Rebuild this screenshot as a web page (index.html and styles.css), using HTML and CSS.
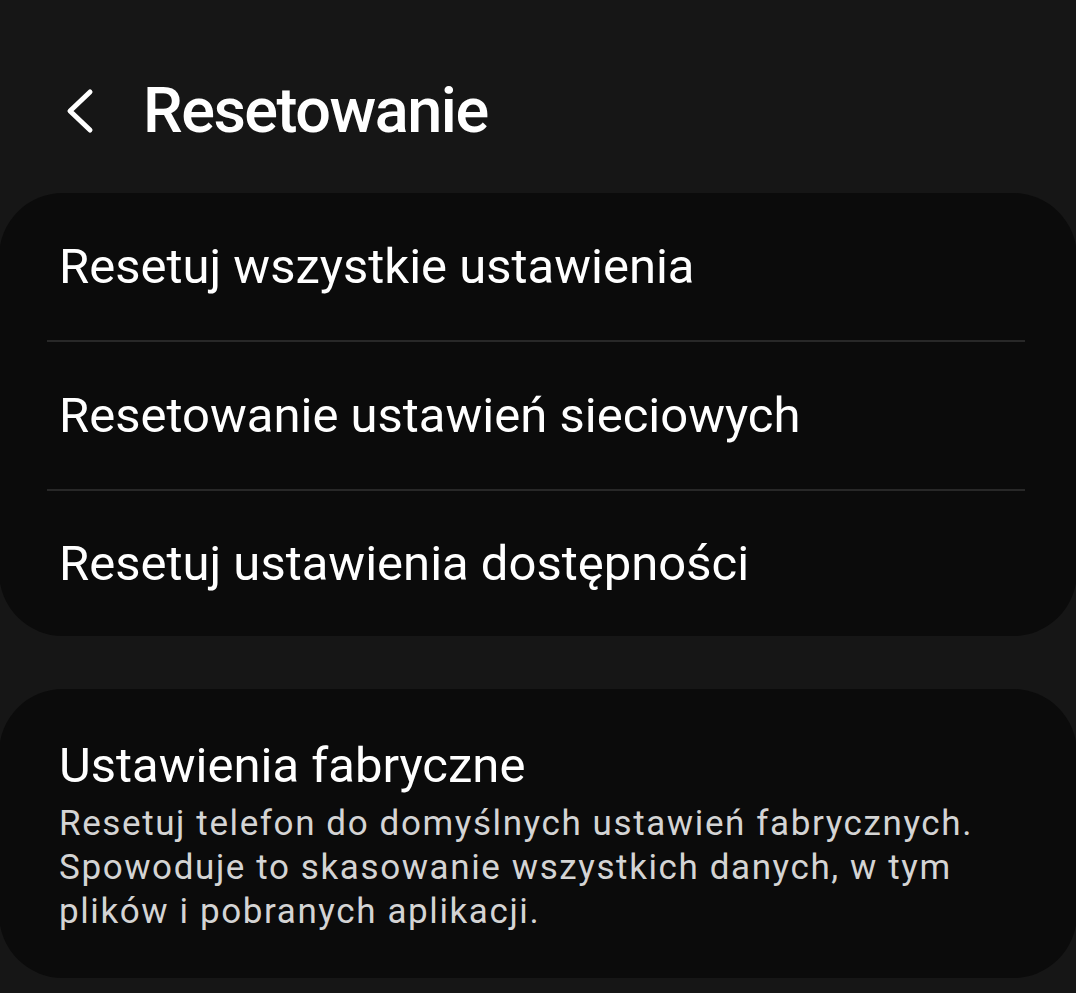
FILE: index.html
```html
<!DOCTYPE html>
<html lang="pl">
<head>
<meta charset="utf-8">
<link rel="stylesheet" href="styles.css">
</head>
<body>
<header class="top">
  <svg class="back" width="30" height="46" viewBox="0 0 30 46"><path d="M26 4 L6 23 L26 42" fill="none" stroke="#fff" stroke-width="5" stroke-linecap="round" stroke-linejoin="round"/></svg>
  <h1 class="title">Resetowanie</h1>
</header>
<section class="card">
  <div class="row">Resetuj wszystkie ustawienia</div>
  <div class="row">Resetowanie ustawień sieciowych</div>
  <div class="row">Resetuj ustawienia dostępności</div>
</section>
<section class="card card2">
  <div class="item">
    <div class="item-title">Ustawienia fabryczne</div>
    <div class="item-desc">Resetuj telefon do domyślnych ustawień fabrycznych. Spowoduje to skasowanie wszystkich danych, w tym plików i pobranych aplikacji.</div>
  </div>
</section>
</body>
</html>
```
FILE: styles.css
```css
html, body {
  margin: 0;
  padding: 0;
  background: #161616;
  color: #fff;
  font-family: Roboto, "Noto Sans", sans-serif;
  overflow: hidden;
}
body {
  width: 1076px;
  height: 993px;
}
.top {
  display: flex;
  align-items: center;
  height: 193px;
  box-sizing: border-box;
  padding: 71px 0 42px 64px;
}
.back {
  display: block;
  margin-right: 49px;
}
.title {
  margin: 0;
  font-size: 63px;
  font-weight: 500;
  letter-spacing: -1.5px;
  line-height: 80px;
}
.card {
  background: #0b0b0b;
  border-radius: 64px;
  margin: 0 -1px;
  padding: 0 52px 0 48px;
}
.row {
  height: 149px;
  display: flex;
  align-items: center;
  padding-left: 12px;
  font-size: 49px;
  border-bottom: 2px solid #282828;
  box-sizing: border-box;
}
.row:last-child {
  border-bottom: none;
  height: 145px;
}
.card2 {
  margin-top: 53px;
}
.item {
  padding: 47px 8px 44px 12px;
}
.item-title {
  font-size: 49px;
  line-height: 60px;
}
.item-desc {
  font-size: 35px;
  line-height: 44px;
  letter-spacing: 1.6px;
  color: #d4d4d4;
  margin-top: 6px;
}
```
